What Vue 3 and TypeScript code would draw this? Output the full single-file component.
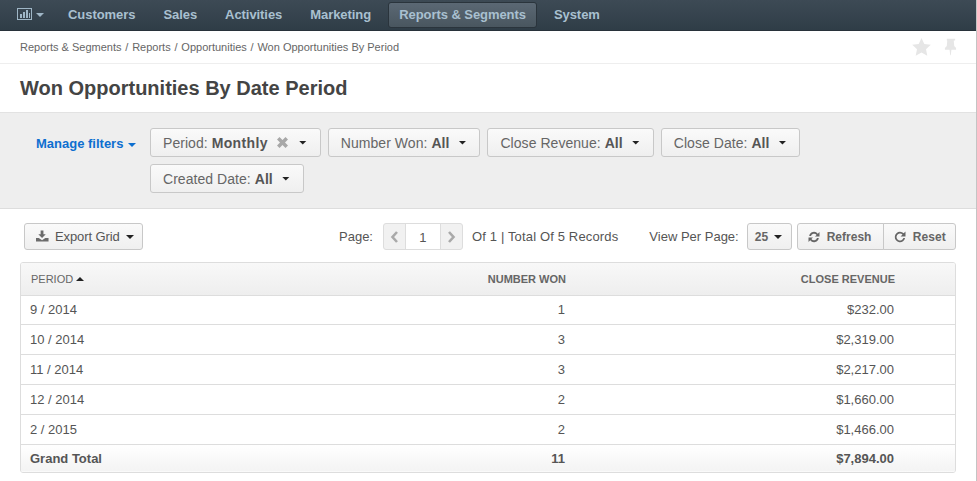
<script setup lang="ts">
const navItems = [
  { label: 'Customers', active: false },
  { label: 'Sales', active: false },
  { label: 'Activities', active: false },
  { label: 'Marketing', active: false },
  { label: 'Reports & Segments', active: true },
  { label: 'System', active: false },
]
const crumbs = ['Reports & Segments', 'Reports', 'Opportunities', 'Won Opportunities By Period']
const firstFilters = [
  { name: 'Number Won:', value: 'All' },
  { name: 'Close Revenue:', value: 'All' },
  { name: 'Close Date:', value: 'All' },
]
const rows = [
  ['9 / 2014', '1', '$232.00'],
  ['10 / 2014', '3', '$2,319.00'],
  ['11 / 2014', '3', '$2,217.00'],
  ['12 / 2014', '2', '$1,660.00'],
  ['2 / 2015', '2', '$1,466.00'],
]
</script>

<template>
  <div class="page">
    <nav class="nav">
      <span class="nav-dash">
        <svg width="15" height="13" viewBox="0 0 15 13">
          <rect x="0.5" y="0.5" width="14" height="11" fill="none" stroke="#9fb6c6" />
          <path d="M3 6h2v4H3zM6 4h2v6H6zM9 2h2v8H9zM12 5h1v5h-1z" fill="#9fb6c6" />
        </svg>
        <i class="caret nav-caret"></i>
      </span>
      <a v-for="n in navItems" :key="n.label" class="nav-item" :class="{ active: n.active }">{{ n.label }}</a>
    </nav>

    <div class="crumbs">
      <div class="crumb-text">
        <template v-for="(c, i) in crumbs" :key="c">
          <span v-if="i" class="sep">/</span><span>{{ c }}</span>
        </template>
      </div>
      <div class="crumb-icons">
        <svg width="19" height="18" viewBox="0 0 19 18"><path d="M9.500 0l2.800 6 6.500.8-4.800 4.400 1.300 6.500-5.800-3.300-5.800 3.300 1.300-6.500L.2 6.800 6.700 6z" fill="#e6e6e6" /></svg>
        <svg width="13" height="18" viewBox="0 0 14 18"><path d="M3 0h9v2h-1.500l.5 6 2 2v2H8l-.7 6h-.6L6 12H1v-2l2-2 .5-6H3z" fill="#e6e6e6" /></svg>
      </div>
    </div>

    <h1 class="title">Won Opportunities By Date Period</h1>

    <section class="filters">
      <a class="manage">Manage filters <i class="caret blue"></i></a>
      <div class="filter-list">
        <button class="fbtn period">
          <span>Period: <b class="wide">Monthly</b></span>
          <svg class="x" width="11" height="11" viewBox="0 0 11 11"><path d="M2.500 0L5.500 3 8.500 0 11 2.500 8 5.500l3 3L8.500 11l-3-3-3 3L0 8.500l3-3-3-3z" fill="#a8a8a8" /></svg>
          <i class="tri"></i>
        </button>
        <button v-for="f in firstFilters" :key="f.name" class="fbtn">
          <span>{{ f.name }} <b>{{ f.value }}</b></span>
          <i class="tri"></i>
        </button>
        <button class="fbtn">
          <span>Created Date: <b>All</b></span>
          <i class="tri"></i>
        </button>
      </div>
    </section>

    <section class="toolbar">
      <button class="tbtn export">
        <svg width="13" height="13" viewBox="0 0 14 13"><path d="M5 0h3v4h2.500L6.500 8 2.500 4H5zM0 8h3l3.500 2.500L10 8h3.500v4H0zM10.500 10h1v1h-1z" fill="#6b6b6b" /></svg>
        Export Grid <i class="caret dark"></i>
      </button>
      <div class="pager-wrap">
        <span class="lbl">Page:</span>
        <div class="pager">
          <span class="arrow"><svg width="9" height="12" viewBox="0 0 9 12"><path d="M7 1L2.500 6 7 11" fill="none" stroke="#a9a9a9" stroke-width="2.600" /></svg></span>
          <span class="pnum">1</span>
          <span class="arrow"><svg width="9" height="12" viewBox="0 0 9 12"><path d="M2 1l4.500 5L2 11" fill="none" stroke="#a9a9a9" stroke-width="2.600" /></svg></span>
        </div>
        <span class="lbl of">Of 1 | Total Of 5 Records</span>
      </div>
      <div class="per-wrap">
        <span class="lbl">View Per Page:</span>
        <button class="tbtn per">25 <i class="caret dark"></i></button>
        <div class="group">
          <button class="tbtn refresh">
            <svg width="12" height="12" viewBox="0 0 12 12"><path d="M1.200 5A4.800 4.800 0 0 1 9.800 2.800L11.500 1v4.500H7l1.600-1.600A3.200 3.200 0 0 0 3 5zM10.800 7A4.800 4.800 0 0 1 2.200 9.200L.5 11V6.500H5L3.400 8.100A3.200 3.200 0 0 0 9 7z" fill="#666" /></svg>
            Refresh
          </button>
          <button class="tbtn reset">
            <svg width="12" height="12" viewBox="0 0 12 12"><path d="M6 .8A5.200 5.200 0 0 1 9.700 2.300L11.500 .6v4.900H6.600L8.500 3.600A3.500 3.500 0 1 0 9.400 7h1.700A5.200 5.200 0 1 1 6 .8z" fill="#666" /></svg>
            Reset
          </button>
        </div>
      </div>
    </section>

    <div class="grid-box">
      <table>
        <colgroup>
          <col class="c1" /><col class="c2" /><col class="c3" /><col class="c4" />
        </colgroup>
        <thead>
          <tr>
            <th>PERIOD <i class="caret up"></i></th>
            <th class="r">NUMBER WON</th>
            <th class="r">CLOSE REVENUE</th>
            <th></th>
          </tr>
        </thead>
        <tbody>
          <tr v-for="r in rows" :key="r[0]">
            <td>{{ r[0] }}</td>
            <td class="r">{{ r[1] }}</td>
            <td class="r">{{ r[2] }}</td>
            <td></td>
          </tr>
        </tbody>
        <tfoot>
          <tr>
            <td>Grand Total</td>
            <td class="r">11</td>
            <td class="r">$7,894.00</td>
            <td></td>
          </tr>
        </tfoot>
      </table>
    </div>
  </div>
</template>

<style>
html, body { margin: 0; background: #fff; overflow: hidden; }
</style>

<style scoped>
.page {
  width: 976px;
  height: 481px;
  border-right: 1px solid #c4c4c4;
  font-family: "Liberation Sans", Arial, sans-serif;
  color: #444;
  overflow: hidden;
  background: #fff;
}
.nav {
  height: 31px;
  box-sizing: border-box;
  display: flex;
  align-items: center;
  width: 977px;
  background: linear-gradient(#3d4a55, #2f3d47);
  border-bottom: 1px solid #28323a;
  padding-left: 17px;
}
.nav-dash { display: flex; align-items: center; gap: 4px; width: 40px; margin-bottom: 1px; }
.nav-item {
  font-size: 13px;
  font-weight: bold;
  letter-spacing: -0.06px;
  color: #a9c0d0;
  padding: 0 10px;
  margin-right: 6px;
  line-height: 24px;
  border: 1px solid transparent;
  border-radius: 3px;
  margin-bottom: 1px;
}
.nav-item.active {
  background: linear-gradient(#5b6874, #49565f);
  border-color: #2a343c;
}
.caret {
  display: inline-block;
  width: 0;
  height: 0;
  border-left: 4px solid transparent;
  border-right: 4px solid transparent;
  border-top: 4px solid #222;
  vertical-align: middle;
}
.tri {
  display: block;
  flex: none;
  width: 8px;
  height: 4px;
  margin-left: 9px;
  background: #222;
  clip-path: polygon(0 0, 100% 0, 50% 100%);
}
.nav-caret { border-top-color: #9fb6c6; }
.caret.blue { border-top-color: #0d6fd0; margin-left: 1px; }
.caret.dark { border-top-color: #222; }
.caret.up { border-top: 0; border-bottom: 4px solid #222; vertical-align: 2px; }
.crumbs {
  height: 33px;
  box-sizing: border-box;
  border-bottom: 1px solid #eee;
  display: flex;
  align-items: center;
  justify-content: space-between;
  padding: 0 19px 1px 20px;
  font-size: 11px;
  color: #666;
}
.sep { margin: 0 3.800px; }
.crumb-icons { display: flex; gap: 13px; align-items: center; }
.title {
  margin: 0;
  height: 48px;
  box-sizing: border-box;
  padding: 12px 0 0 20px;
  font-size: 20px;
  line-height: 24px;
  font-weight: bold;
  color: #444;
}
.filters {
  height: 97px;
  box-sizing: border-box;
  background: #eee;
  border-top: 1px solid #e2e2e2;
  border-bottom: 1px solid #ddd;
  display: flex;
  align-items: flex-start;
  padding-top: 15px;
}
.manage {
  font-size: 13px;
  font-weight: bold;
  color: #0d6fd0;
  margin-left: 36px;
  width: 114px;
  flex: none;
  line-height: 31px;
  white-space: nowrap;
}
.filter-list { display: flex; flex-wrap: wrap; gap: 7px; width: 700px; }
.fbtn {
  height: 29px;
  box-sizing: border-box;
  display: inline-flex;
  align-items: center;
  padding: 0 13px 0 12px;
  font: 14px "Liberation Sans", Arial, sans-serif;
  letter-spacing: 0.05px;
  color: #666;
  background: linear-gradient(#fafafa, #efefef);
  border: 1px solid #c8c8c8;
  border-radius: 3px;
}
.fbtn b { color: #555; }
.fbtn b.wide { letter-spacing: 0.35px; }
.period .x { margin-left: 9px; }
.period .tri { margin-left: 11px; }
.toolbar {
  height: 53px;
  box-sizing: border-box;
  padding: 14px 20px 0 24px;
  display: flex;
  align-items: flex-start;
  font-size: 13px;
  color: #555;
}
.tbtn {
  height: 27px;
  box-sizing: border-box;
  display: inline-flex;
  align-items: center;
  font: bold 12px "Liberation Sans", Arial, sans-serif;
  color: #666;
  background: linear-gradient(#fafafa, #efefef);
  border: 1px solid #c8c8c8;
  border-radius: 3px;
  padding: 0 10px;
  gap: 7px;
}
.tbtn svg { flex: none; }
.export { width: 119px; font-weight: normal; font-size: 13px; letter-spacing: -0.1px; padding: 0 0 0 11px; color: #555; gap: 6px; white-space: nowrap; justify-content: flex-start; }
.pager-wrap { margin-left: 196px; display: flex; align-items: center; height: 27px; }
.lbl { white-space: nowrap; }
.pager {
  margin-left: 10px;
  width: 80px;
  height: 27px;
  box-sizing: border-box;
  display: flex;
  border: 1px solid #ddd;
  border-radius: 3px;
  background: #f1f1f1;
  flex: none;
}
.arrow { width: 21px; display: flex; align-items: center; justify-content: center; }
.pnum {
  flex: 1;
  background: #fff;
  border-left: 1px solid #ddd;
  border-right: 1px solid #ddd;
  text-align: center;
  line-height: 28px;
  font-size: 13px;
}
.of { margin-left: 9px; letter-spacing: 0.15px; }
.per-wrap { margin-left: 31px; display: flex; align-items: center; height: 27px; }
.per { margin-left: 8px; width: 45px; padding: 0 0 0 7px; gap: 6px; flex: none; }
.group { display: flex; margin-left: 5px; }
.refresh { width: 87px; padding-left: 10px; border-radius: 3px 0 0 3px; }
.reset { width: 73px; padding-left: 10px; margin-left: -1px; border-radius: 0 3px 3px 0; letter-spacing: 0.1px; }
.grid-box {
  margin: 0 0 0 20px;
  width: 936px;
  box-sizing: border-box;
  border: 1px solid #ddd;
  border-radius: 3px;
  overflow: hidden;
}
table { width: 934px; table-layout: fixed; border-collapse: collapse; font-size: 13px; color: #555; }
.c1 { width: 300px; }
.c2 { width: 254px; }
.c3 { width: 329px; }
.c4 { width: 51px; }
th {
  height: 32px;
  padding: 0 10px;
  font-size: 11px;
  font-weight: bold;
  color: #666;
  text-align: left;
  background: linear-gradient(#f8f8f8, #eee);
  border-bottom: 1px solid #ddd;
  box-sizing: border-box;
}
th:first-child { font-weight: normal; }
td {
  height: 30px;
  padding: 0 9px;
  box-sizing: border-box;
  border-bottom: 1px solid #ddd;
}
tbody tr:first-child td { height: 29px; }
.r { text-align: right; padding-right: 10px; }
th.r { padding-right: 9px; }
tfoot td {
  height: 28px;
  border-bottom: 0;
  font-weight: bold;
  background: linear-gradient(#fff, #f3f3f3);
}
</style>
